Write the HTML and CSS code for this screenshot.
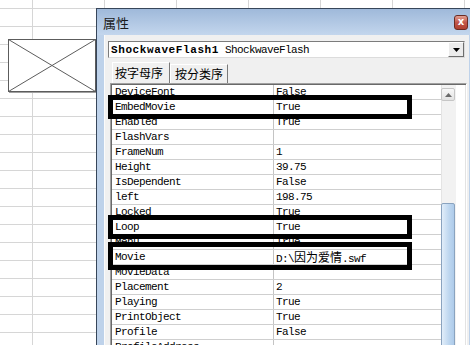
FILE: index.html
```html
<!DOCTYPE html>
<html>
<head>
    <meta charset="UTF-8">
    <title>属性</title>
    <link rel="stylesheet" href="styles.css">
</head>
<body>
<div class="sheet">
    <!-- picture placeholder on the worksheet -->
    <svg class="shape" width="89" height="54" viewBox="0 0 89 54">
        <rect x="0.5" y="0.5" width="87" height="52" fill="#fff" stroke="#5c5c5c"/>
        <line x1="0.5" y1="0.5" x2="87.5" y2="52.5" stroke="#5c5c5c"/>
        <line x1="87.5" y1="0.5" x2="0.5" y2="52.5" stroke="#5c5c5c"/>
        <line x1="1" y1="53.5" x2="88" y2="53.5" stroke="#a0a0a0"/>
    </svg>

    <div class="dialog">
        <div class="titlebar">
            <span class="title">属性</span>
            <span class="close">x</span>
        </div>
        <div class="body">
            <div class="combo">
                <span class="combo-text"><b>ShockwaveFlash1</b> ShockwaveFlash</span>
                <span class="drop"><svg width="7" height="4" viewBox="0 0 7 4"><path d="M0 0h7L3.5 4z" fill="#000"/></svg></span>
            </div>
            <div class="tabs">
                <div class="tab active">按字母序</div>
                <div class="tab">按分类序</div>
            </div>
            <div class="grid">
                <div class="rows">
                    <div class="row"><span class="name">DeviceFont</span><span class="value">False</span></div>
                    <div class="row"><span class="name">EmbedMovie</span><span class="value">True</span></div>
                    <div class="row"><span class="name">Enabled</span><span class="value">True</span></div>
                    <div class="row"><span class="name">FlashVars</span><span class="value"></span></div>
                    <div class="row"><span class="name">FrameNum</span><span class="value">1</span></div>
                    <div class="row"><span class="name">Height</span><span class="value">39.75</span></div>
                    <div class="row"><span class="name">IsDependent</span><span class="value">False</span></div>
                    <div class="row"><span class="name">left</span><span class="value">198.75</span></div>
                    <div class="row"><span class="name">Locked</span><span class="value">True</span></div>
                    <div class="row"><span class="name">Loop</span><span class="value">True</span></div>
                    <div class="row"><span class="name">Menu</span><span class="value">True</span></div>
                    <div class="row"><span class="name">Movie</span><span class="value">D:\<span class="cjk">因为爱情</span>.swf</span></div>
                    <div class="row"><span class="name">MovieData</span><span class="value"></span></div>
                    <div class="row"><span class="name">Placement</span><span class="value">2</span></div>
                    <div class="row"><span class="name">Playing</span><span class="value">True</span></div>
                    <div class="row"><span class="name">PrintObject</span><span class="value">True</span></div>
                    <div class="row"><span class="name">Profile</span><span class="value">False</span></div>
                    <div class="row"><span class="name">ProfileAddress</span><span class="value"></span></div>
                </div>
                <div class="vscroll">
                    <div class="up"><svg width="7" height="4" viewBox="0 0 7 4"><path d="M0 4h7L3.5 0z" fill="#6a6a6a"/></svg></div>
                    <div class="thumb"></div>
                </div>

                <!-- marker boxes drawn over the rows -->
                <div class="mark mark-embed"></div>
                <div class="mark mark-loop"></div>
                <div class="mark mark-movie"></div>
            </div>
        </div>
    </div>
</div>
</body>
</html>
```

FILE: styles.css
```css
body {
    margin: 0;
    padding: 0;
    background-color: #fff;
}

.sheet {
    position: relative;
    width: 470px;
    height: 345px;
    overflow: hidden;
    background-color: #fff;
    background-image:
        linear-gradient(to bottom, #d6d6d6 1px, transparent 1px),
        linear-gradient(to right, #d6d6d6 1px, transparent 1px);
    background-size: 100% 18px, 72px 100%;
    background-position: 0 8px, 32px 0;
}

.shape {
    position: absolute;
    left: 8px;
    top: 39px;
}

/* property window */
.dialog {
    position: absolute;
    left: 96px;
    top: 8px;
    width: 381px;
    height: 345px;
    box-sizing: border-box;
    padding: 0 8px 0 7px;
    border-left: 1px solid #37465a;
    border-top: 1px solid #37465a;
    background: linear-gradient(to bottom, #9fb9da 0, #c3d6ed 26px, #bed2ea 26px);
    font-family: "Noto Sans CJK SC", sans-serif;
}

.titlebar {
    height: 26px;
    display: flex;
    align-items: center;
    justify-content: space-between;
}

.title {
    margin-left: -1px;
    font-size: 13px;
    color: #1a1a1a;
}

.close {
    width: 14px;
    height: 15px;
    box-sizing: border-box;
    margin-right: 1px;
    border: 1px solid #6b2c24;
    border-radius: 3px;
    background: linear-gradient(to bottom, #e2a093, #c2574a 50%, #b0402f);
    color: #fff;
    font: bold 10px/12px "DejaVu Sans", sans-serif;
    text-align: center;
}

.body {
    height: 320px;
    padding-top: 6px;
    background-color: #f0f0f0;
    box-shadow: inset 1px 0 0 #fbfbfb;
}

.combo {
    display: flex;
    align-items: center;
    justify-content: space-between;
    height: 17px;
    margin: 0 4px;
    box-sizing: border-box;
    border: 1px solid;
    border-color: #7c7c7c #dcdcdc #dcdcdc #7c7c7c;
    background-color: #fff;
}

.combo-text {
    padding-left: 2px;
    font-family: "Liberation Mono", monospace;
    font-size: 11px;
    letter-spacing: -0.6px;
    color: #000;
}

.combo-text b {
    letter-spacing: 0.6px;
}

.drop {
    display: flex;
    align-items: center;
    justify-content: center;
    width: 16px;
    height: 15px;
    box-sizing: border-box;
    border: 1px solid;
    border-color: #fff #6e6e6e #6e6e6e #fff;
    background-color: #ececec;
}

.tabs {
    display: flex;
    align-items: flex-end;
    height: 21px;
    margin-top: 4px;
    padding-left: 8px;
}

.tab {
    height: 19px;
    width: 58px;
    box-sizing: border-box;
    padding-left: 4px;
    border-top: 1px solid #fff;
    border-left: 1px solid #fff;
    border-right: 1px solid #7a7a7a;
    font-size: 12px;
    line-height: 17px;
    color: #000;
}

.tab.active {
    width: 58px;
    height: 21px;
    padding-left: 2px;
    line-height: 19px;
    margin-right: 0;
}

.grid {
    position: relative;
    display: flex;
    height: 280px;
    margin: 0 2px 0 6px;
    padding: 1px;
    border: 1px solid;
    border-color: #a0a0a0 #fff #fff #a0a0a0;
    box-shadow: inset 1px 1px 0 #696969, inset -1px -1px 0 #e3e3e3;
    background-color: #fff;
    font-family: "Liberation Mono", "Noto Sans CJK SC", monospace;
    font-size: 11px;
    letter-spacing: -0.6px;
    color: #000;
}

.rows {
    width: 329px;
}

.row {
    display: flex;
    height: 15px;
    box-sizing: border-box;
    border-bottom: 1px solid #cfcfcf;
    line-height: 14px;
    white-space: nowrap;
}

.name {
    width: 162px;
    box-sizing: border-box;
    padding-left: 3px;
    border-right: 1px solid #c4c4c4;
}

.value {
    padding-left: 2px;
}

.cjk {
    font-family: "Noto Sans CJK SC", sans-serif;
    font-size: 12px;
    letter-spacing: 0;
}

.vscroll {
    width: 15px;
    margin-right: 2px;
    background-color: #f2f2f2;
    box-shadow: inset 1px 0 0 #e4e4e4;
}

.up {
    display: flex;
    align-items: center;
    justify-content: center;
    width: 14px;
    height: 13px;
    margin-top: 3px;
    box-sizing: border-box;
    border: 1px solid #c6c6c6;
    border-radius: 2px;
    background: linear-gradient(to bottom, #f8f8f8, #e2e2e2);
}

.thumb {
    width: 14px;
    height: 150px;
    margin-top: 102px;
    box-sizing: border-box;
    border: 1px solid #8aa3bf;
    border-radius: 2px;
    background: linear-gradient(to right, #e1edf9, #bdd6ef 60%, #aecbea);
}

.mark {
    position: absolute;
    left: -3px;
    width: 304px;
    box-sizing: border-box;
    border: 5px solid #000;
}

.mark-embed {
    top: 11px;
    height: 24px;
}

.mark-loop {
    top: 131px;
    height: 24px;
}

.mark-movie {
    top: 158px;
    height: 28px;
}
```
